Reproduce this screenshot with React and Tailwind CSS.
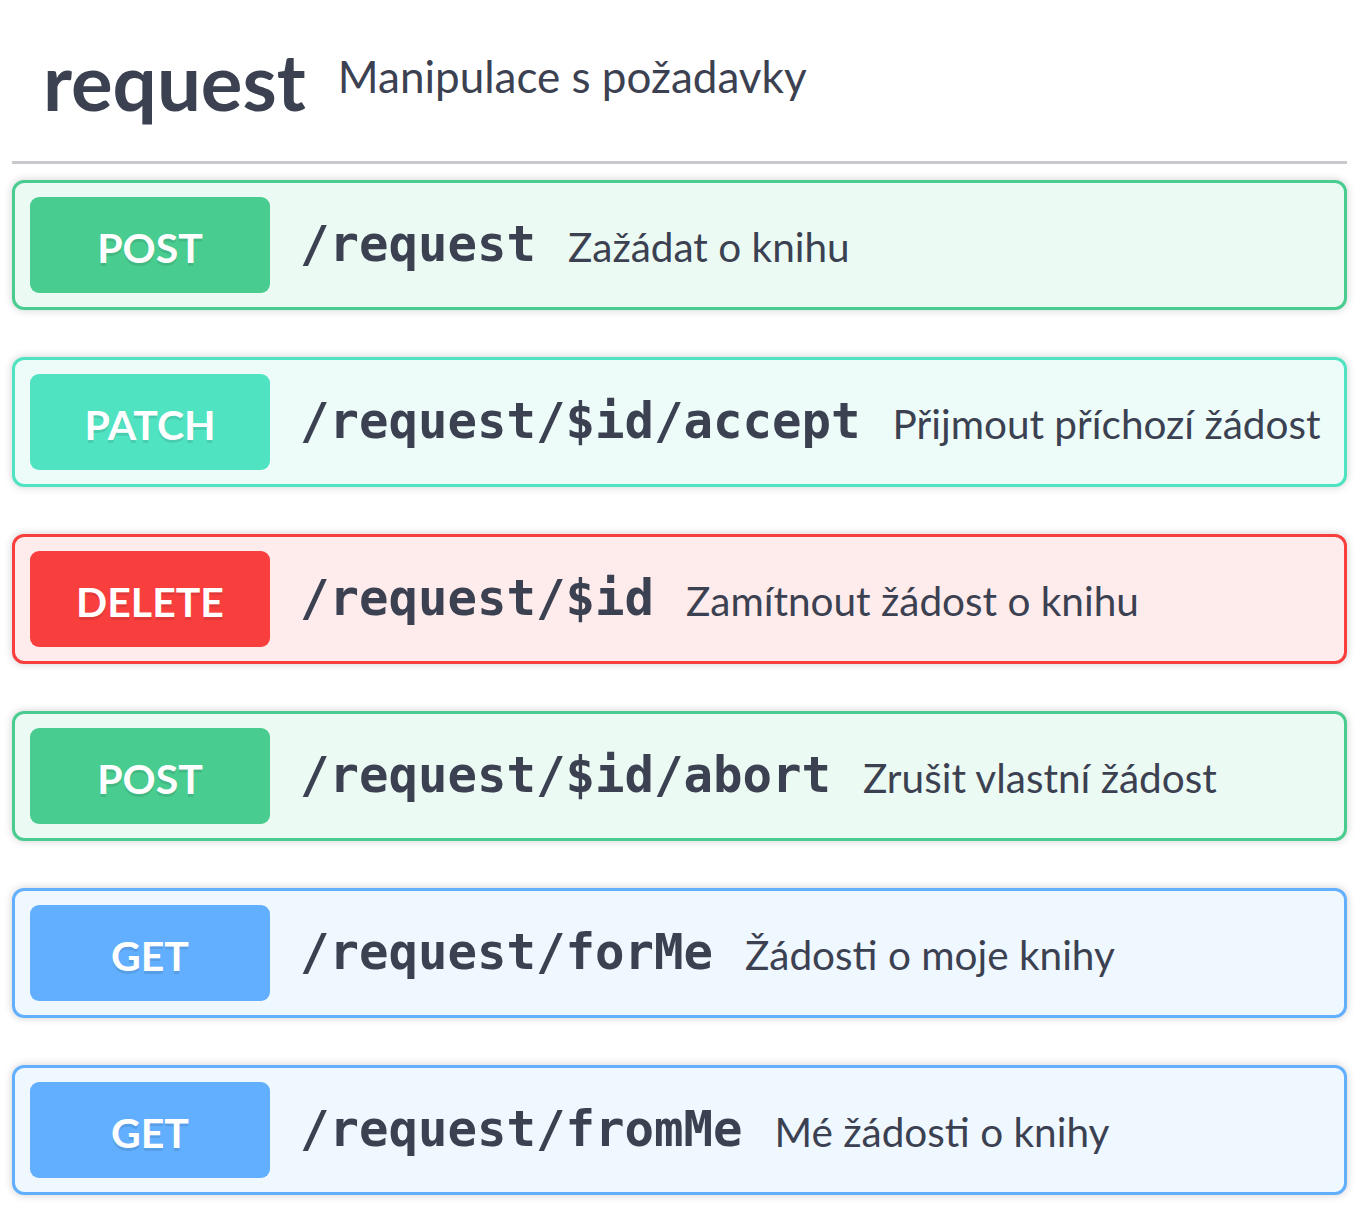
const ops = [
  { method: 'POST', path: '/request', summary: 'Zažádat o knihu', color: 'post' },
  { method: 'PATCH', path: '/request/$id/accept', summary: 'Přijmout příchozí žádost', color: 'patch' },
  { method: 'DELETE', path: '/request/$id', summary: 'Zamítnout žádost o knihu', color: 'delete' },
  { method: 'POST', path: '/request/$id/abort', summary: 'Zrušit vlastní žádost', color: 'post' },
  { method: 'GET', path: '/request/forMe', summary: 'Žádosti o moje knihy', color: 'get' },
  { method: 'GET', path: '/request/fromMe', summary: 'Mé žádosti o knihy', color: 'get' },
];

const styles = {
  post: { block: 'bg-[#ecfaf4] border-[#49cc90]', badge: 'bg-[#49cc90]' },
  patch: { block: 'bg-[#edfcf9] border-[#50e3c2]', badge: 'bg-[#50e3c2]' },
  delete: { block: 'bg-[#feebeb] border-[#f93e3e]', badge: 'bg-[#f93e3e]' },
  get: { block: 'bg-[#eff7ff] border-[#61affe]', badge: 'bg-[#61affe]' },
};

function OpBlock({ op }) {
  const s = styles[op.color];
  return (
    <div
      className={`mx-[12px] mb-[47px] rounded-[12px] border-[3px] ${s.block} shadow-[0_0_9px_rgba(0,0,0,0.19)]`}
    >
      <div className="flex h-[124px] items-center px-[15px]">
        <span
          className={`${s.badge} flex h-[96px] w-[240px] shrink-0 items-center justify-center rounded-[9px] pt-[6px] text-[41px] font-bold text-white [text-shadow:0_3px_0_rgba(0,0,0,0.1)] font-['Lato',sans-serif]`}
        >
          {op.method}
        </span>
        <span className="pl-[30px] pr-[32px] text-[49px] font-bold text-[#3b4151] font-['DejaVu_Sans_Mono',monospace]">
          {op.path}
        </span>
        <span className="pt-[4px] text-[40.5px] text-[#3b4151] font-['Lato',sans-serif]">{op.summary}</span>
      </div>
    </div>
  );
}

export default function App() {
  return (
    <div className="min-h-screen bg-white pt-[42px]">
      <div className="mx-[12px] flex items-center border-b-[3px] border-[#c8c9cd] pb-[41px] pl-[31px]">
        <h3 className="text-[78px] font-bold leading-none text-[#3b4151] font-['Lato',sans-serif]">request</h3>
        <span className="ml-[32px] -mt-[10px] text-[44px] leading-none text-[#3b4151] font-['Lato',sans-serif]">
          Manipulace s požadavky
        </span>
      </div>
      <div className="pt-[16px]">
        {ops.map((op, i) => (
          <OpBlock key={i} op={op} />
        ))}
      </div>
    </div>
  );
}
